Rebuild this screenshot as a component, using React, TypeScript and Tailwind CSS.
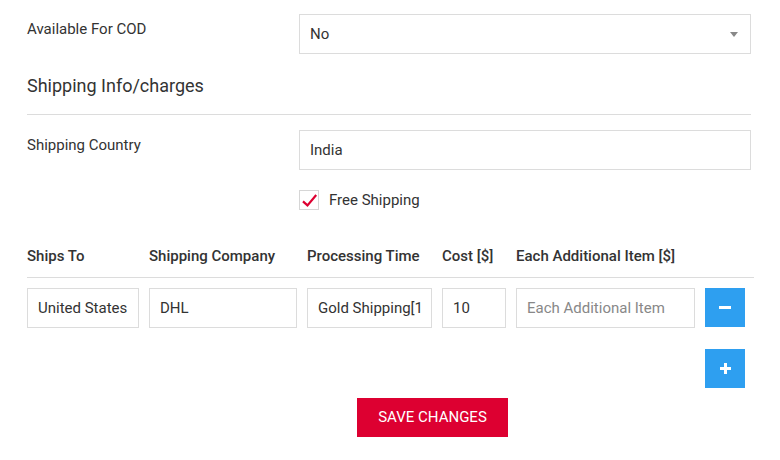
import React from "react";

const cols = "grid grid-cols-[112px_148px_125px_64px_179px_40px] gap-x-[10px]";

export default function App() {
  const inputCls =
    "h-[40px] w-full border border-[#dcdcdc] bg-white px-[10px] text-[15px] text-[#333] outline-none placeholder:text-[#888] font-['Roboto']";
  return (
    <div className="w-[780px] h-[460px] bg-white pl-[27px] pr-[29px] pt-[14px] font-['Roboto',sans-serif] text-[#333]">
      <div className="flex">
        <div className="w-[272px] pt-[5px] text-[15px] leading-[20px]">Available For COD</div>
        <div className="flex-1 h-[40px] border border-[#dcdcdc] px-[10px] flex items-center justify-between text-[15px]">
          <span>No</span>
          <svg width="8" height="5" viewBox="0 0 8 5" className="mr-[2px]">
            <path d="M0 0H8L4 5Z" fill="#888" />
          </svg>
        </div>
      </div>

      <div className="mt-[19px] text-[18px] leading-[26px]">Shipping Info/charges</div>
      <div className="mt-[15px] h-px bg-[#dcdcdc]" />

      <div className="mt-[15px] flex">
        <div className="w-[272px] pt-[5px] text-[15px] leading-[20px]">Shipping Country</div>
        <div className="flex-1">
          <input className={inputCls} defaultValue="India" readOnly />
        </div>
      </div>

      <div className="mt-[20px] ml-[272px] flex items-center gap-[10px]">
        <div className="w-[20px] h-[20px] border border-[#d6d6d6] flex items-center justify-center">
          <svg width="20" height="20" viewBox="0 0 20 20">
            <path d="M3.3 11.5L8.3 16L18 4.5" fill="none" stroke="#dd0031" strokeWidth="2.4" />
          </svg>
        </div>
        <span className="text-[15px] leading-[20px]">Free Shipping</span>
      </div>

      <div className={`${cols} mt-[36px] pb-[11px] text-[15px] leading-[20px] font-medium`}>
        <div className="whitespace-nowrap">Ships To</div>
        <div className="whitespace-nowrap">Shipping Company</div>
        <div className="whitespace-nowrap">Processing Time</div>
        <div className="whitespace-nowrap">Cost [$]</div>
        <div className="whitespace-nowrap">Each Additional Item [$]</div>
        <div />
      </div>
      <div className="h-px w-[727px] bg-[#dcdcdc]" />

      <div className={`${cols} mt-[10px]`}>
        <input className={inputCls} defaultValue="United States" readOnly />
        <input className={inputCls} defaultValue="DHL" readOnly />
        <input className={inputCls} defaultValue="Gold Shipping[15 days]" readOnly />
        <input className={inputCls} defaultValue="10" readOnly />
        <input className={inputCls} placeholder="Each Additional Item" />
        <button className="h-[39px] w-[40px] bg-[#2e9ff0] flex items-center justify-center">
          <span className="block w-[12px] h-[3px] bg-white" />
        </button>
      </div>

      <div className="mt-[21px] ml-[678px]">
        <button className="h-[39px] w-[40px] bg-[#2e9ff0] flex items-center justify-center">
          <svg width="11" height="11" viewBox="0 0 11 11">
            <path d="M4 0H7V4H11V7H7V11H4V7H0V4H4Z" fill="#fff" />
          </svg>
        </button>
      </div>

      <div className="mt-[10px] ml-[330px]">
        <button className="h-[39px] w-[151px] bg-[#dd0031] text-white text-[15px] uppercase flex items-center justify-center font-['Roboto']">
          Save Changes
        </button>
      </div>
    </div>
  );
}
